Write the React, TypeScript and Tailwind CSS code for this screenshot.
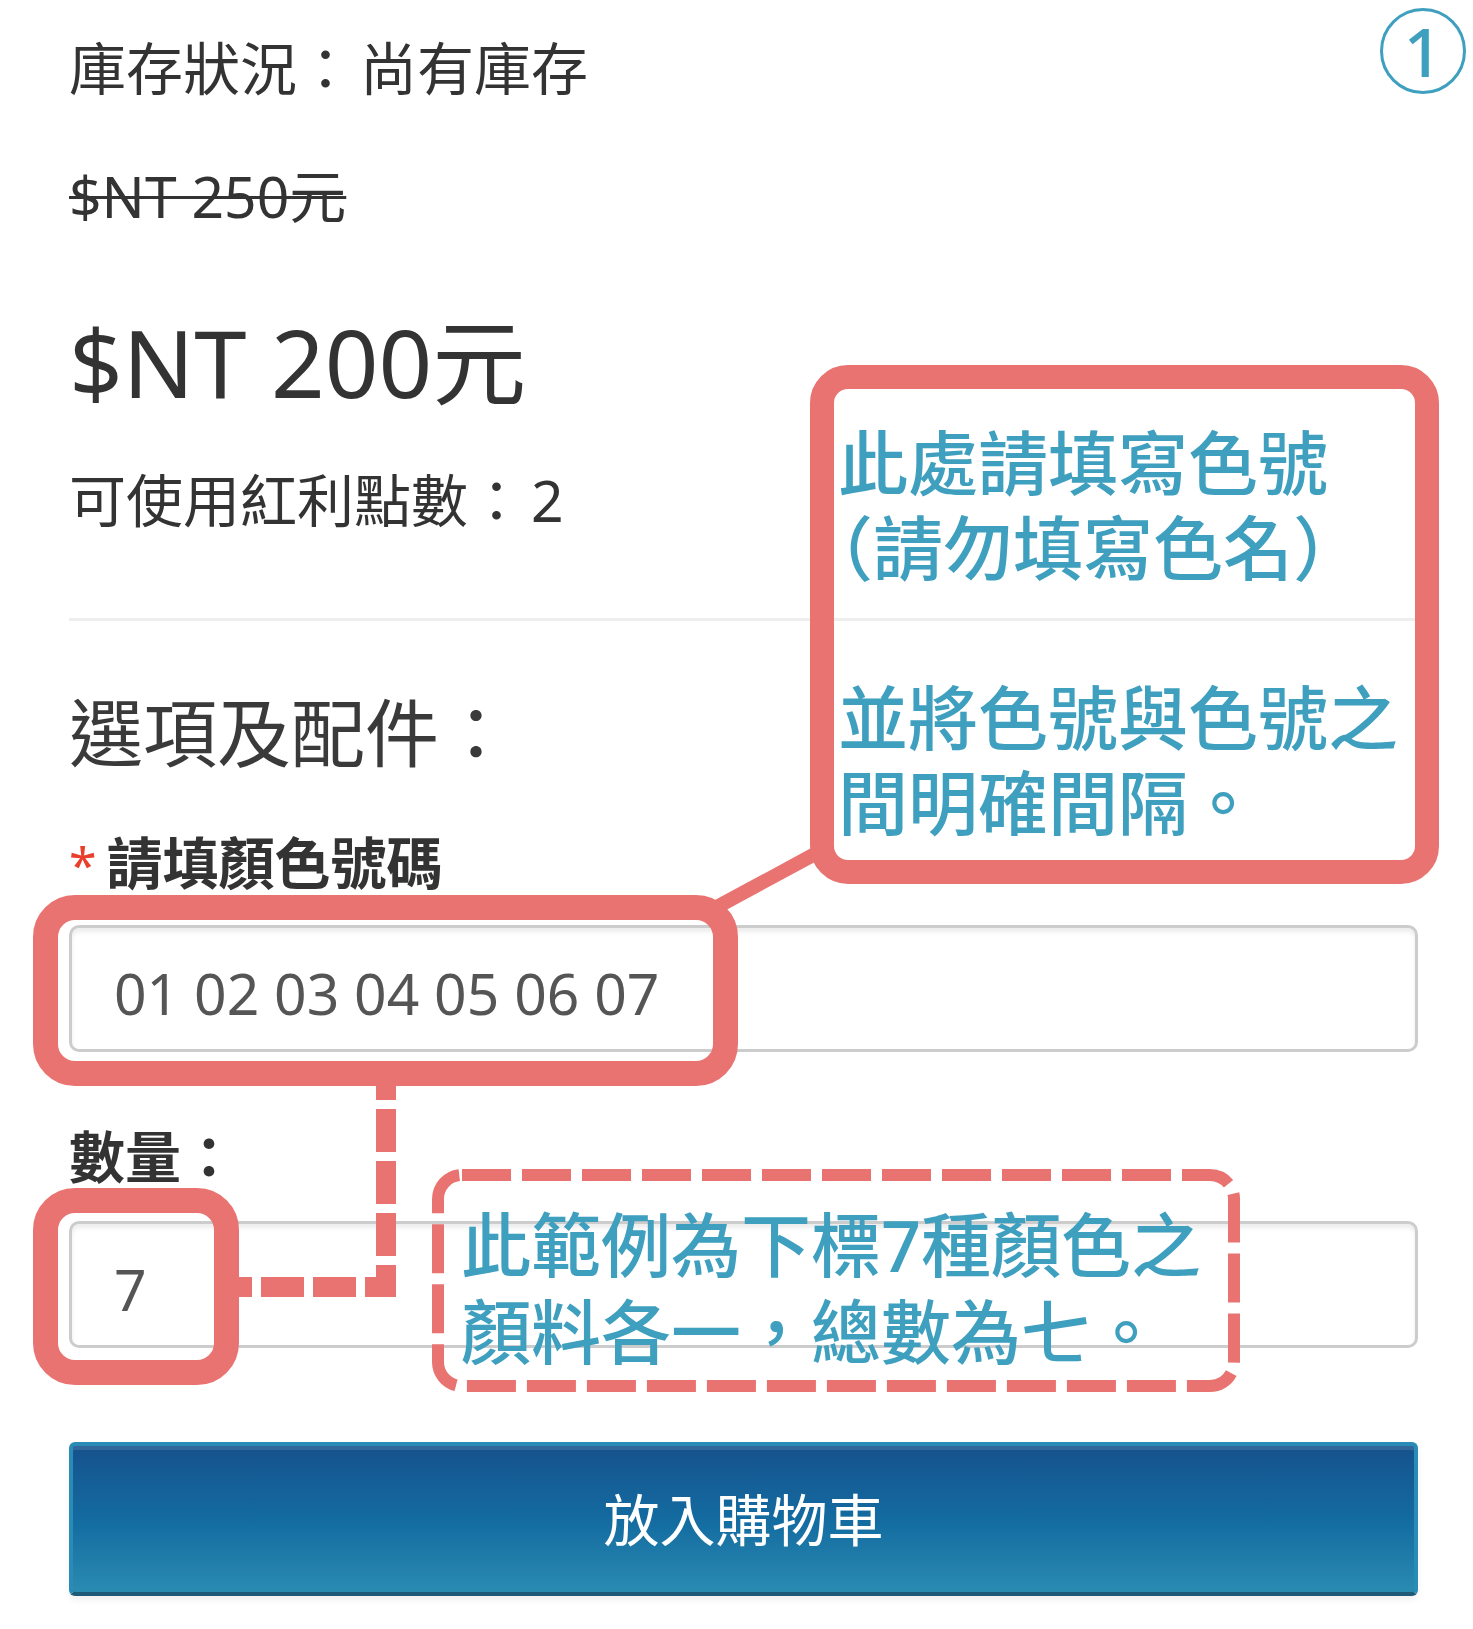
export default function App() {
  const pink = '#e97371';

  return (
    <div className="relative w-[1473px] h-[1629px] overflow-hidden bg-white text-[#333333] font-['Noto_Sans','Noto_Sans_CJK_TC',sans-serif]">
      {/* product info column */}
      <div className="ml-[69px] w-[1349px] flex flex-col">
        <div className="mt-[40px] h-[57px] leading-[57px] text-[57px] whitespace-nowrap">
          庫存狀況：<span className="ml-[6px]">尚有庫存</span>
        </div>
        <div className="mt-[71px] h-[57px] leading-[57px] text-[57px] whitespace-nowrap">
          <span className="line-through decoration-[3px]">$NT 250元</span>
        </div>
        <div className="mt-[90px] h-[94px] leading-[94px] text-[94px] whitespace-nowrap">$NT 200元</div>
        <div className="mt-[63px] h-[57px] leading-[57px] text-[57px] whitespace-nowrap">
          可使用紅利點數：<span className="ml-[6px]">2</span>
        </div>
        <div className="mt-[89px] h-[3px] bg-[#eeeeee]" />

        <div className="mt-[75px] h-[74px] leading-[74px] text-[74px] text-[#3a3a3a] whitespace-nowrap">選項及配件：</div>

        <div className="mt-[64px] h-[56px] leading-[56px] text-[56px] font-bold whitespace-nowrap">
          <span className="font-normal text-[#e9402d] text-[50px]">*</span>
          <span className="ml-[10px]">請填顏色號碼</span>
        </div>
        <input
          readOnly
          value="01 02 03 04 05 06 07"
          className="mt-[35px] h-[127px] w-full rounded-[10px] border-[3px] border-[#cccccc] bg-white pl-[42px] pt-[8px] text-[57px] text-[#555555] shadow-[inset_0_4px_4px_rgba(0,0,0,0.075)] outline-none"
        />

        <div className="mt-[76px] h-[56px] leading-[56px] text-[56px] font-bold whitespace-nowrap">數量：</div>
        <input
          readOnly
          value="7"
          className="mt-[37px] h-[127px] w-full rounded-[10px] border-[3px] border-[#cccccc] bg-white pl-[42px] pt-[8px] text-[57px] text-[#555555] shadow-[inset_0_4px_4px_rgba(0,0,0,0.075)] outline-none"
        />

        <button className="mt-[94px] h-[154px] w-full rounded-[6px] border-[4px] border-[#2a8bb6] border-b-[#1f5b76] bg-linear-to-b from-[#16528d] via-[#136ba0] to-[#2a8bb1] text-[56px] font-normal text-white shadow-[inset_0_4px_0_rgba(255,255,255,0.12),0_4px_6px_rgba(0,0,0,0.06)]">
          放入購物車
        </button>
      </div>

      {/* step marker */}
      <div className="absolute left-[1380px] top-[8px] flex h-[86px] w-[86px] items-center justify-center rounded-full border-[3px] border-[#3f9fbf] font-['Noto_Sans',sans-serif] text-[68px] font-medium leading-[80px] text-[#3f9fbf]">
        1
      </div>

      {/* annotation connectors */}
      <svg className="pointer-events-none absolute left-0 top-0" width="1473" height="1629" viewBox="0 0 1473 1629" fill="none">
        <line x1="715" y1="908" x2="826" y2="848" stroke={pink} strokeWidth="14" />
        <path d="M239 1287 H386 V1086" stroke={pink} strokeWidth="20" strokeDasharray="43 9" strokeDashoffset="30" />
        <rect x="438" y="1175" width="796" height="211" rx="24" stroke={pink} strokeWidth="12" strokeDasharray="49 11" />
      </svg>

      {/* highlight frames */}
      <div className="absolute left-[33px] top-[895px] h-[191px] w-[705px] rounded-[42px] border-[25px] border-[#e97371]" />
      <div className="absolute left-[33px] top-[1188px] h-[197px] w-[206px] rounded-[42px] border-[25px] border-[#e97371]" />

      {/* callout */}
      <div className="absolute left-[810px] top-[365px] h-[519px] w-[629px] rounded-[38px] border-[24px] border-[#e97371] pl-[4px] pt-[28px] font-['Noto_Sans_CJK_TC',sans-serif] text-[70px] font-medium leading-[85px] whitespace-nowrap text-[#3f9fbf]">
        此處請填寫色號
        <br />
        <span className="[font-feature-settings:'halt']">（</span>請勿填寫色名<span className="[font-feature-settings:'halt']">）</span>
        <br />
        <br />
        並將色號與色號之
        <br />
        間明確間隔。
      </div>

      <div className="absolute left-[432px] top-[1169px] h-[223px] w-[809px] pl-[29px] pt-[31px] font-['Noto_Sans_CJK_TC',sans-serif] text-[70px] font-medium leading-[84px] whitespace-nowrap text-[#3f9fbf]">
        此範例為下標<span className="font-['Noto_Sans',sans-serif]">7</span>種顏色之
        <br />
        顏料各一，總數為七。
      </div>
    </div>
  );
}
